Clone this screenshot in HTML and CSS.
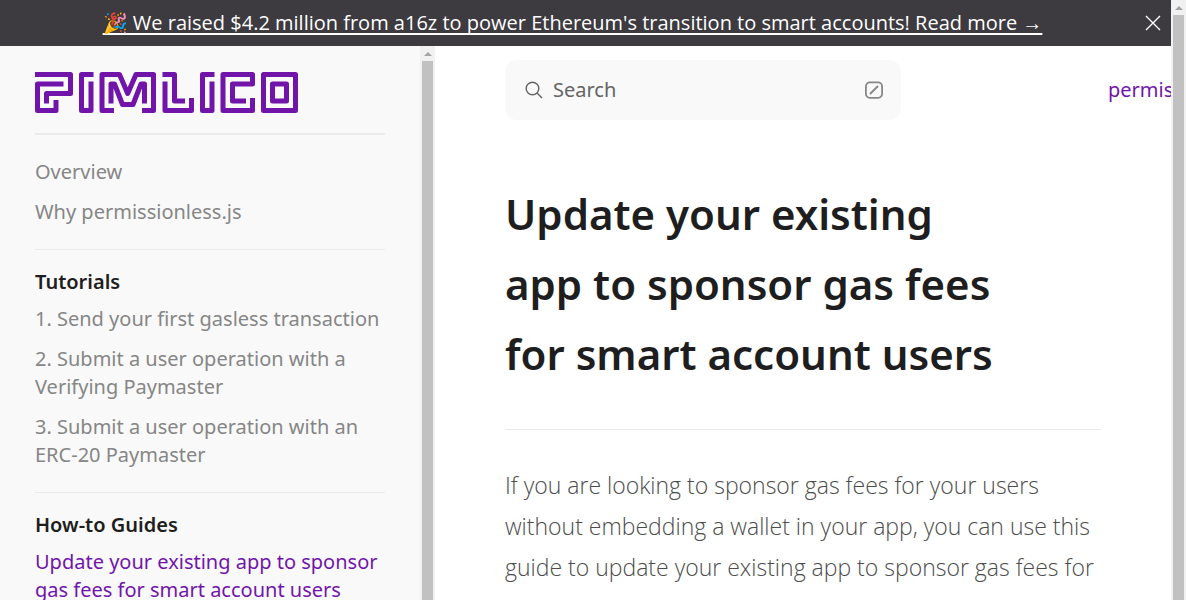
FILE: index.html
```html
<!DOCTYPE html>
<html lang="en">
<head>
<meta charset="utf-8">
<meta name="viewport" content="width=device-width, initial-scale=1">
<title>Update your existing app to sponsor gas fees for smart account users</title>
<link rel="stylesheet" href="styles.css">
</head>
<body>
<div class="page">
  <div class="site">
    <div class="banner">
      <a class="banner-link" href="#news">🎉 We raised $4.2 million from a16z to power Ethereum's transition to smart accounts! Read more →</a>
      <button class="banner-close" type="button" aria-label="Close banner">
        <svg width="16" height="16" viewBox="0 0 16 16" fill="none" stroke="currentColor" stroke-width="1.4"><path d="M1 1l14 14M15 1L1 15"/></svg>
      </button>
    </div>
    <div class="columns">
      <aside class="sidebar">
        <div class="sidebar-content">
          <a class="logo" href="#home" aria-label="Pimlico">
            <svg width="263" height="41" viewBox="0 0 263 41" fill="none" stroke="currentColor" stroke-width="5" stroke-linejoin="round">
              <path d="M0 2.5H35.5V21.5H11.5V31.5M28.5 12H2.5V38.5H21V28"/>
              <path d="M58.5 2.5H46.5V38.5H56V9.5"/>
              <path d="M79 38.5H67V2.5H84.5L92.7 21.5L101 2.5H118.5V38.5H107"/>
              <path d="M76 31.5V12H79.5L87.5 32.5H98L106 12H109.5V31.5"/>
              <path d="M127.5 2.5H139.5V29H150M130 9.5V38.5H156.5V26"/>
              <path d="M179.5 2.5H167.5V38.5H177V9.5"/>
              <path d="M211 29H197.5V12H217.5V2.5H188V38.5H217.5V26"/>
              <path d="M228.5 2.5h32v36h-32zM237.5 12h14v17h-14z"/>
            </svg>
          </a>
          <nav class="nav" aria-label="Documentation">
            <section class="nav-group nav-group-first">
              <a class="nav-link" href="#overview">Overview</a>
              <a class="nav-link" href="#why">Why permissionless.js</a>
            </section>
            <section class="nav-group">
              <h2 class="nav-title">Tutorials</h2>
              <a class="nav-link" href="#t1">1. Send your first gasless transaction</a>
              <a class="nav-link" href="#t2">2. Submit a user operation with a Verifying Paymaster</a>
              <a class="nav-link" href="#t3">3. Submit a user operation with an ERC-20 Paymaster</a>
            </section>
            <section class="nav-group">
              <h2 class="nav-title">How-to Guides</h2>
              <a class="nav-link nav-link-active" href="#guide" aria-current="page">Update your existing app to sponsor gas fees for smart account users</a>
            </section>
          </nav>
        </div>
        <div class="scrollbar" aria-hidden="true"><span class="scroll-arrow"></span><span class="scroll-thumb"></span></div>
      </aside>
      <div class="content">
        <header class="topbar">
          <button class="search" type="button">
            <svg width="18" height="18" viewBox="0 0 18 18" fill="none" stroke="currentColor" stroke-width="1.4"><circle cx="7.5" cy="7.5" r="6.3"/><path d="M12 12l5 5"/></svg>
            <span class="search-label">Search</span>
            <svg class="search-key" width="18" height="18" viewBox="0 0 18 18" fill="none" stroke="currentColor" stroke-width="1.8"><rect x="0.9" y="1.4" width="16.2" height="15.4" rx="4"/><path d="M5.5 12.5l7-7" stroke-linecap="round"/></svg>
          </button>
          <a class="top-link" href="#permissionless">permissionless.js</a>
        </header>
        <main class="article">
          <h1 class="title">Update your existing app to sponsor gas fees for smart account users</h1>
          <p class="lead">If you are looking to sponsor gas fees for your users without embedding a wallet in your app, you can use this guide to update your existing app to sponsor gas fees for</p>
        </main>
      </div>
    </div>
  </div>
  <div class="scrollbar" aria-hidden="true"><span class="scroll-arrow"></span><span class="scroll-thumb"></span></div>
</div>
</body>
</html>
```
FILE: styles.css
```css
*, *::before, *::after { box-sizing: border-box; }

body {
  margin: 0;
  overflow: hidden;
  background: #fff;
  color: #1e1e20;
  font-family: "Noto Sans", "Open Sans", sans-serif;
}

a { color: inherit; text-decoration: none; }
button { border: 0; padding: 0; font: inherit; cursor: pointer; }
h1, h2, p { margin: 0; }

.page { display: flex; height: 100vh; }
.site { flex: 1; min-width: 0; display: flex; flex-direction: column; overflow: hidden; }

.banner {
  display: flex;
  align-items: center;
  flex-shrink: 0;
  padding: 8px 10px 8px 0;
  background: #3d3a40;
  color: #fff;
  font-family: "Open Sans", "Noto Sans", sans-serif;
  font-size: 20px;
  line-height: 30px;
}
.banner-link {
  margin: 0 auto;
  white-space: nowrap;
  text-decoration: underline;
  text-decoration-thickness: 2px;
  text-underline-offset: 3px;
  text-decoration-skip-ink: none;
}
.banner-close { display: flex; padding: 0; background: transparent; color: inherit; }

.columns { flex: 1; min-height: 0; display: flex; }

.sidebar { flex: 0 0 435px; display: flex; background: #f9f9f9; }
.sidebar-content { flex: 1; min-width: 0; padding: 0 35px; overflow: hidden; }
.logo { display: block; padding: 26px 0 20px; border-bottom: 2px solid #ebebeb; color: #7115aa; }
.logo svg { display: block; }

.nav-group {
  display: flex;
  flex-direction: column;
  gap: 12px;
  padding: 18px 0 23px;
  border-bottom: 1px solid #ebebeb;
}
.nav-group-first { padding-top: 23px; }
.nav-title { margin-bottom: -3px; font-size: 20px; font-weight: 600; line-height: 28px; }
.nav-link { color: #868686; font-size: 20px; line-height: 28px; }
.nav-link-active { color: #7115aa; }

.scrollbar {
  flex: 0 0 15px;
  display: flex;
  flex-direction: column;
  padding: 0 2px;
  background: #f1f1f1;
}
.scroll-arrow { height: 15px; display: flex; align-items: center; justify-content: center; }
.scroll-arrow::before {
  content: "";
  border: 4px solid transparent;
  border-top-width: 0;
  border-bottom-color: #a3a3a3;
}
.scroll-thumb { flex: 1; background: #c1c1c1; }

.content { flex: 1; min-width: 0; padding: 14px 0 0 70px; overflow: hidden; }
.topbar { display: flex; align-items: center; justify-content: space-between; line-height: 28px; }
.search {
  flex: 0 0 396px;
  display: flex;
  align-items: center;
  gap: 10px;
  height: 60px;
  padding: 0 18px 0 20px;
  border-radius: 12px;
  background: #f9f9f9;
  color: #646464;
  font-size: 20px;
}
.search-key { margin-left: auto; color: #868686; }
.top-link { flex: 0 0 63px; min-width: 0; color: #7115aa; font-size: 20px; white-space: nowrap; }

.article { margin-right: 70px; padding-top: 59px; }
.title {
  padding-bottom: 40px;
  border-bottom: 1px solid #ebebeb;
  font-size: 42px;
  font-weight: 600;
  line-height: 70px;
  text-wrap: balance;
}
.lead {
  padding-top: 35px;
  color: #4c4c4c;
  font-family: "Open Sans", "Noto Sans", sans-serif;
  font-size: 23px;
  font-weight: 300;
  line-height: 41px;
}
```
